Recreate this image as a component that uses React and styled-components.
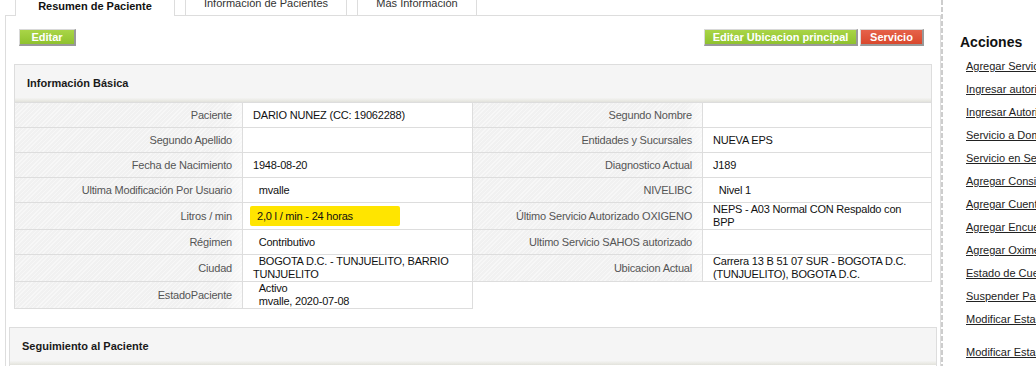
import React from "react";
import styled, { createGlobalStyle } from "styled-components";

const GlobalStyle = createGlobalStyle`
  html, body {
    margin: 0;
    padding: 0;
    background: #fff;
    overflow: hidden;
  }
  body {
    font-family: "Liberation Sans", Arial, sans-serif;
    font-size: 11px;
    color: #222;
  }
`;

const Page = styled.div`
  display: flex;
  width: 1036px;
  height: 366px;
  overflow: hidden;
`;

const Main = styled.div`
  flex: 0 0 941px;
  box-sizing: border-box;
  padding-left: 5px;
  display: flex;
  flex-direction: column;
`;

const TabBar = styled.div`
  display: flex;
  align-items: flex-end;
  gap: 10px;
  height: 25px;
  margin-top: -10px;
  padding-left: 10px;
  position: relative;
  z-index: 1;
`;

const Tab = styled.div`
  box-sizing: border-box;
  width: ${(p) => p.$w}px;
  height: ${(p) => (p.$active ? 26 : 25)}px;
  margin-bottom: ${(p) => (p.$active ? -1 : 0)}px;
  border: 1px solid #ddd;
  border-bottom: none;
  background: #fff;
  text-align: center;
  line-height: ${(p) => (p.$active ? 30 : 25)}px;
  font-weight: ${(p) => (p.$active ? "bold" : "normal")};
  color: ${(p) => (p.$active ? "#111" : "#333")};
  overflow: hidden;
`;

const Panel = styled.div`
  flex: 1;
  border: 1px solid #ddd;
  border-bottom: none;
  background: #fff;
  padding-top: 13px;
`;

const Toolbar = styled.div`
  display: flex;
  justify-content: space-between;
  padding: 0 16px 0 13px;
`;

const ButtonGroup = styled.div`
  display: flex;
  gap: 2px;
`;

const Button = styled.button`
  box-sizing: border-box;
  width: ${(p) => p.$w}px;
  height: 17px;
  padding: 0;
  margin: 0;
  font-family: inherit;
  font-size: 11px;
  font-weight: bold;
  line-height: 14px;
  text-align: center;
  white-space: nowrap;
  color: #fff;
  border-style: solid;
  border-width: 1px 2px 2px 1px;
  border-color: #d8d8d8 #999 #999 #d8d8d8;
  background: ${(p) =>
    p.$red
      ? "linear-gradient(#e6624a, #d9482d)"
      : "linear-gradient(#a9d547, #8fc22e)"};
  cursor: pointer;
`;

const Box = styled.div`
  margin: ${(p) => p.$margin};
`;

const BoxHeader = styled.div`
  box-sizing: border-box;
  height: 38px;
  border: 1px solid #ddd;
  border-bottom: none;
  padding-left: 12px;
  line-height: 37px;
  font-weight: bold;
  color: #1a1a1a;
  background: linear-gradient(
    to bottom,
    #f5f5f5 0,
    #f5f5f5 88%,
    #ebebe6 95%,
    #e2e2dc 100%
  );
`;

const Tables = styled.div`
  display: flex;
  align-items: flex-start;
`;

const DataTable = styled.table`
  width: 459px;
  border-collapse: separate;
  border-spacing: 0;
  table-layout: fixed;
  border-top: 1px solid #ddd;
  border-left: ${(p) => (p.$first ? "1px solid #ddd" : "none")};

  tr {
    height: 25px;
  }
  td {
    padding: 0;
    border-right: 1px solid #ddd;
    border-bottom: 1px solid #ddd;
    line-height: 13px;
    letter-spacing: -0.2px;
    vertical-align: middle;
  }
  td:first-child {
    width: ${(p) => p.$labelW}px;
  }
`;

const Label = styled.td`
  text-align: right;
  padding-right: 10px !important;
  color: #555;
  background-color: #f1f1f1;
  background-image: linear-gradient(
      to right,
      rgba(255, 255, 255, 0) 0,
      rgba(255, 255, 255, 0) 92%,
      rgba(255, 255, 255, 0.55) 100%
    ),
    repeating-linear-gradient(
      135deg,
      rgba(255, 255, 255, 0.45) 0 1px,
      rgba(255, 255, 255, 0) 1px 3px
    );
`;

const Value = styled.td`
  padding-left: 10px !important;
  color: #111;
`;

const Highlight = styled.div`
  width: 150px;
  box-sizing: border-box;
  margin: 3px 0 3px -3px;
  padding-left: 7px;
  line-height: 20px;
  border-radius: 2px;
  background: #ffe500;
`;

const BoxBody = styled.div`
  height: 60px;
  border: 1px solid #ddd;
  border-top: none;
`;

const Sidebar = styled.aside`
  flex: 0 0 300px;
  box-sizing: border-box;
  padding: 33px 0 0 19px;
  background: repeating-linear-gradient(
      to bottom,
      #cdcdcd 0 5px,
      rgba(255, 255, 255, 0) 5px 7px
    )
    no-repeat left top / 2px 100%;
`;

const SideTitle = styled.h3`
  margin: 0;
  font-size: 14px;
  line-height: 18px;
  font-weight: bold;
  color: #111;
`;

const LinkList = styled.div`
  margin: 4px 0 0 6px;
`;

const SideLink = styled.a`
  display: block;
  line-height: 23px;
  margin-top: ${(p) => (p.$gap ? 10 : 0)}px;
  color: #222;
  text-decoration: underline;
  white-space: nowrap;
`;

const sp = "\u00a0\u00a0";

const leftRows = [
  ["Paciente", "DARIO NUNEZ (CC: 19062288)"],
  ["Segundo Apellido", ""],
  ["Fecha de Nacimiento", "1948-08-20"],
  ["Ultima Modificación Por Usuario", sp + "mvalle"],
  ["Litros / min", <Highlight>2,0 l / min - 24 horas</Highlight>],
  ["Régimen", sp + "Contributivo"],
  ["Ciudad", sp + "BOGOTA D.C. - TUNJUELITO, BARRIO TUNJUELITO"],
  [
    "EstadoPaciente",
    <>
      {sp}Activo
      <br />
      {sp}mvalle, 2020-07-08
    </>,
  ],
];

const rightRows = [
  ["Segundo Nombre", ""],
  ["Entidades y Sucursales", "NUEVA EPS"],
  ["Diagnostico Actual", "J189"],
  ["NIVELIBC", sp + "Nivel 1"],
  [
    "Último Servicio Autorizado OXIGENO",
    <>
      NEPS - A03 Normal CON Respaldo con
      <br />
      BPP
    </>,
  ],
  ["Ultimo Servicio SAHOS autorizado", ""],
  [
    "Ubicacion Actual",
    <>
      Carrera 13 B 51 07 SUR - BOGOTA D.C.
      <br />
      (TUNJUELITO), BOGOTA D.C.
    </>,
  ],
];

const links = [
  "Agregar Servicio",
  "Ingresar autorización",
  "Ingresar Autorización Oxígeno",
  "Servicio a Domicilio",
  "Servicio en Sede",
  "Agregar Consignación",
  "Agregar Cuenta",
  "Agregar Encuesta",
  "Agregar Oximetría",
  "Estado de Cuenta",
  "Suspender Paciente",
  "Modificar Estado",
];

const InfoTable = ({ rows, first, labelW }) => (
  <DataTable $first={first} $labelW={labelW}>
    <tbody>
      {rows.map(([label, value]) => (
        <tr key={label}>
          <Label>{label}</Label>
          <Value>{value}</Value>
        </tr>
      ))}
    </tbody>
  </DataTable>
);

export default function App() {
  return (
    <>
      <GlobalStyle />
      <Page>
        <Main>
          <TabBar>
            <Tab $w={160} $active>
              Resumen de Paciente
            </Tab>
            <Tab $w={162}>Información de Pacientes</Tab>
            <Tab $w={120}>Más Información</Tab>
          </TabBar>
          <Panel>
            <Toolbar>
              <Button $w={57}>Editar</Button>
              <ButtonGroup>
                <Button $w={154}>Editar Ubicacion principal</Button>
                <Button $w={64} $red>
                  Servicio
                </Button>
              </ButtonGroup>
            </Toolbar>

            <Box $margin="18px 8px 0">
              <BoxHeader>Información Básica</BoxHeader>
              <Tables>
                <InfoTable rows={leftRows} first labelW={217} />
                <InfoTable rows={rightRows} labelW={219} />
              </Tables>
            </Box>

            <Box $margin="18px 3px 0">
              <BoxHeader>Seguimiento al Paciente</BoxHeader>
              <BoxBody />
            </Box>
          </Panel>
        </Main>

        <Sidebar>
          <SideTitle>Acciones</SideTitle>
          <LinkList>
            {links.map((l) => (
              <SideLink key={l} href="#">
                {l}
              </SideLink>
            ))}
            <SideLink href="#" $gap>
              Modificar Estado Paciente
            </SideLink>
          </LinkList>
        </Sidebar>
      </Page>
    </>
  );
}
